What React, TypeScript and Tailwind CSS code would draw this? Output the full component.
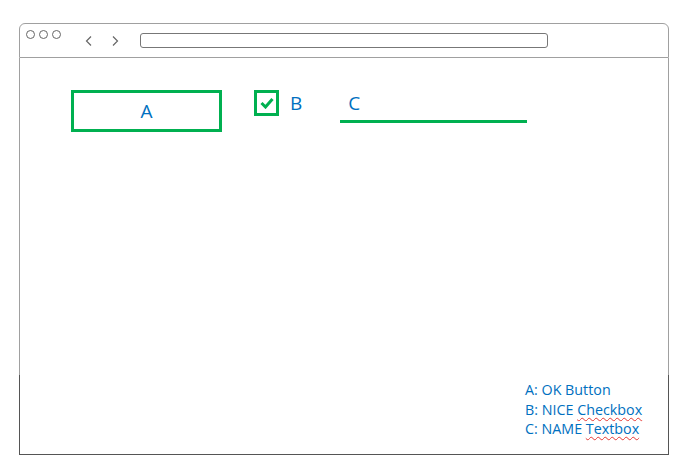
import React from "react";

const font = { fontFamily: '"Open Sans", "Liberation Sans", sans-serif' };

export default function App() {
  return (
    <div className="w-[683px] h-[475px] bg-white overflow-hidden" style={font}>
      <div className="ml-[19px] pt-[23px] w-[650px] flex flex-col">
        {/* header */}
        <div className="h-[35px] border border-[#a0a0a0] rounded-t-[6px] flex items-start">
          <div className="flex items-center gap-[4px] ml-[6px] mt-[6px]">
            <span className="w-[9px] h-[9px] rounded-full border border-[#666]" />
            <span className="w-[9px] h-[9px] rounded-full border border-[#666]" />
            <span className="w-[9px] h-[9px] rounded-full border border-[#666]" />
          </div>
          <svg width="10" height="12" viewBox="0 0 10 12" className="ml-[23px] mt-[11px]">
            <path d="M7 1.5 L2.5 6 L7 10.5" fill="none" stroke="#666" strokeWidth="1.2" />
          </svg>
          <svg width="10" height="12" viewBox="0 0 10 12" className="ml-[16px] mt-[11px]">
            <path d="M3 1.5 L7.5 6 L3 10.5" fill="none" stroke="#666" strokeWidth="1.2" />
          </svg>
          <div className="ml-[20px] mt-[9px] w-[408px] h-[15px] border border-[#777] rounded-[3px]" />
        </div>
        {/* body */}
        <div className="h-[317px] border-x border-[#a0a0a0] flex items-start pt-[32px] pl-[51px]">
          <div className="w-[151px] h-[42px] border-[3px] border-[#00b050] flex items-center justify-center text-[19px] text-[#0070c0] pt-[1px]">
            A
          </div>
          <div className="ml-[32px] w-[25px] h-[26px] border-[3px] border-[#00b050] flex items-center justify-center">
            <svg width="14" height="12" viewBox="0 0 14 12">
              <path d="M1.5 6 L5.5 10 L12.5 2" fill="none" stroke="#00b050" strokeWidth="3" />
            </svg>
          </div>
          <div className="ml-[11px] text-[19px] leading-none text-[#0070c0] mt-[4px]">B</div>
          <div className="ml-[38px] w-[187px] flex flex-col">
            <div className="pl-[8px] text-[19px] leading-none text-[#0070c0] mt-[4px]">C</div>
            <div className="mt-[7px] h-[3px] bg-[#00b050]" />
          </div>
        </div>
        {/* bottom */}
        <div className="h-[80px] border-x border-b border-[#555] flex justify-end">
          <div className="w-[143px] pt-[5px] text-[14.3px] leading-[19.5px] text-[#0070c0]">
            <div>A: OK Button</div>
            <div>
              B: NICE <span className="underline decoration-wavy decoration-[#e53935] decoration-1 underline-offset-2">Checkbox</span>
            </div>
            <div>
              C: NAME <span className="underline decoration-wavy decoration-[#e53935] decoration-1 underline-offset-2">Textbox</span>
            </div>
          </div>
        </div>
      </div>
    </div>
  );
}
